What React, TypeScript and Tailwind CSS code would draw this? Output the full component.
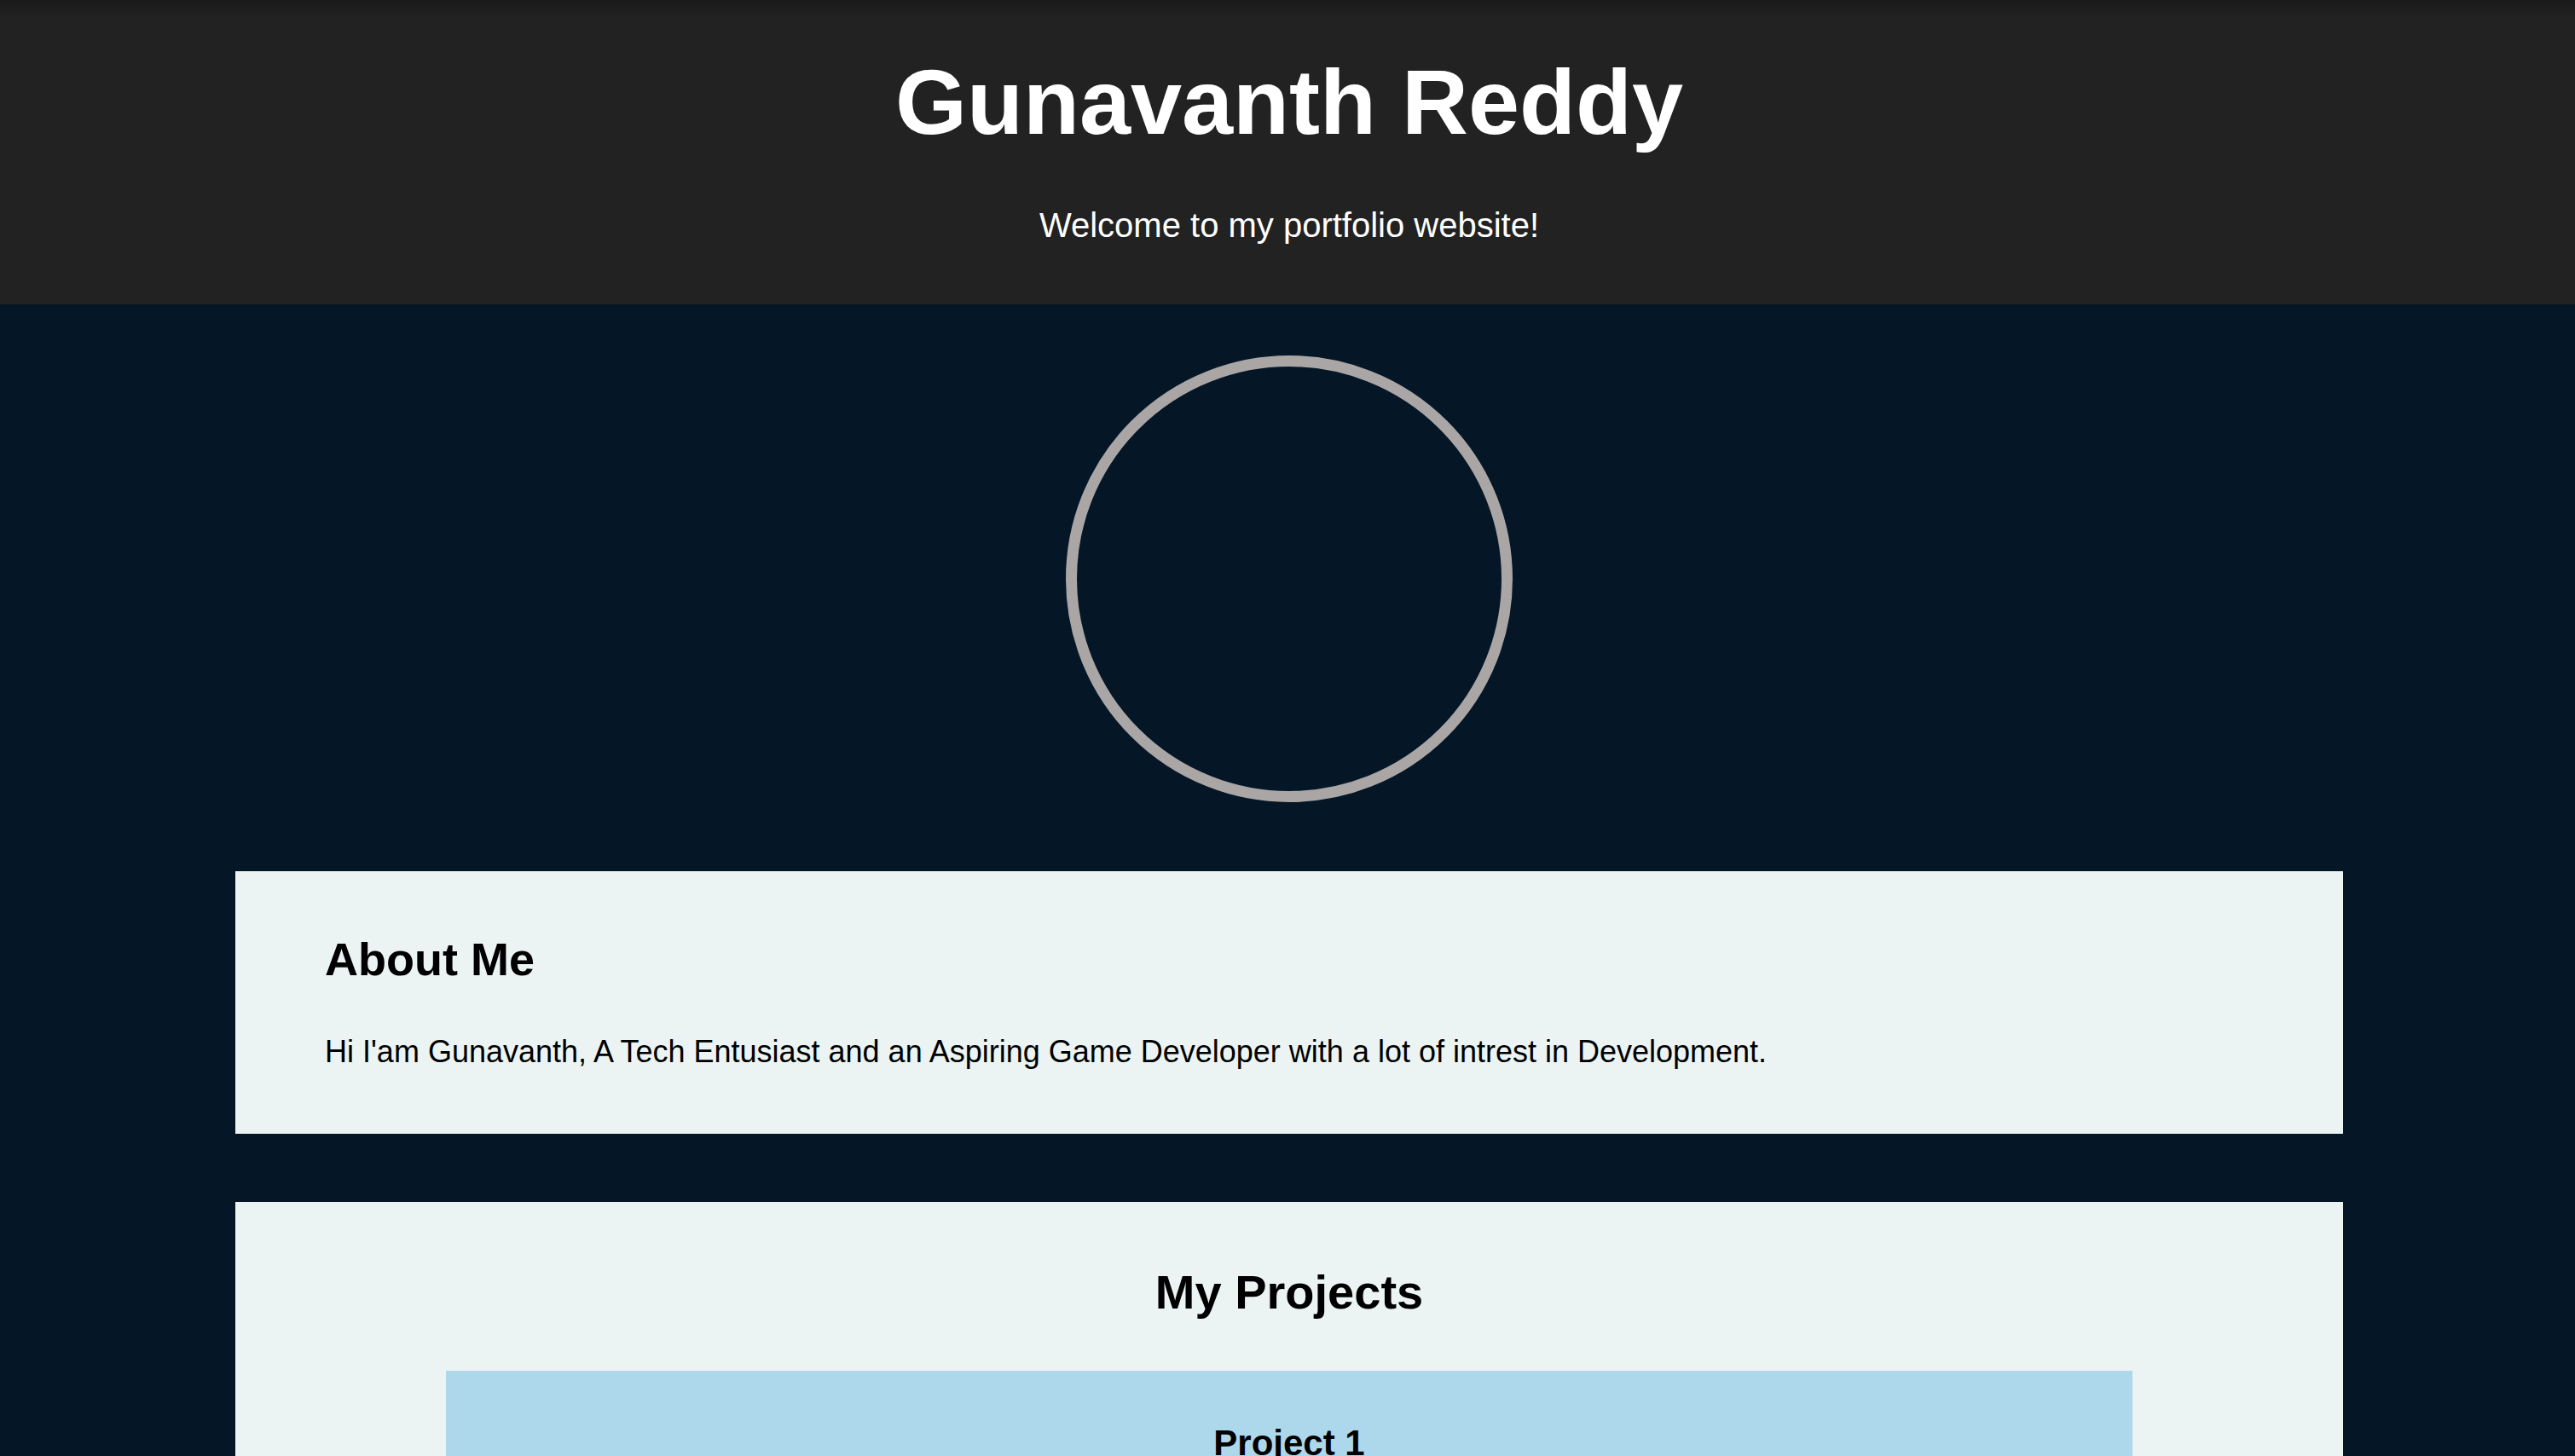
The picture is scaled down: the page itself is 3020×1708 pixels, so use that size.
import React from "react";

export default function App() {
  return (
    <div className="h-screen overflow-hidden bg-[#051626] font-['Liberation_Sans',Arial,sans-serif]">
      <header className="bg-[linear-gradient(to_bottom,#1a1a1a,#222222_22px)] pl-[4px] pt-[57px] pb-[70px] text-center text-white">
        <h1 className="text-[108px] font-bold leading-[126px]">Gunavanth Reddy</h1>
        <p className="mt-[58px] text-[40px] leading-[46px]">Welcome to my portfolio website!</p>
      </header>
      <main className="flex flex-col items-center pl-[4px] pb-[80px]">
        <div className="mt-[60px] size-[524px] rounded-full border-[13px] border-[#aaa6a6]" />
        <section className="mt-[81px] w-[2472px] bg-[#ebf4f3] pl-[105px] pr-[105px] pt-[72px] pb-[76px] text-black">
          <h2 className="text-[54px] font-bold leading-[62px]">About Me</h2>
          <p className="mt-[57px] text-[36px] leading-[1.15]">
            Hi I'am Gunavanth, A Tech Entusiast and an Aspiring Game Developer with a lot of intrest in Development.
          </p>
        </section>
        <section className="mt-[80px] w-[2472px] bg-[#ebf4f3] pt-[74px] pb-[80px] text-black">
          <h2 className="text-center text-[56px] font-bold leading-[1.15]">My Projects</h2>
          <div className="mx-auto mt-[59px] w-[80%] bg-[#add7eb] pt-[61px] pb-[60px] text-center">
            <h3 className="text-[42px] font-bold leading-[1.15]">Project 1</h3>
            <p className="mt-[40px] text-[36px] leading-[1.15]">Description of Project 1.</p>
          </div>
        </section>
      </main>
    </div>
  );
}
